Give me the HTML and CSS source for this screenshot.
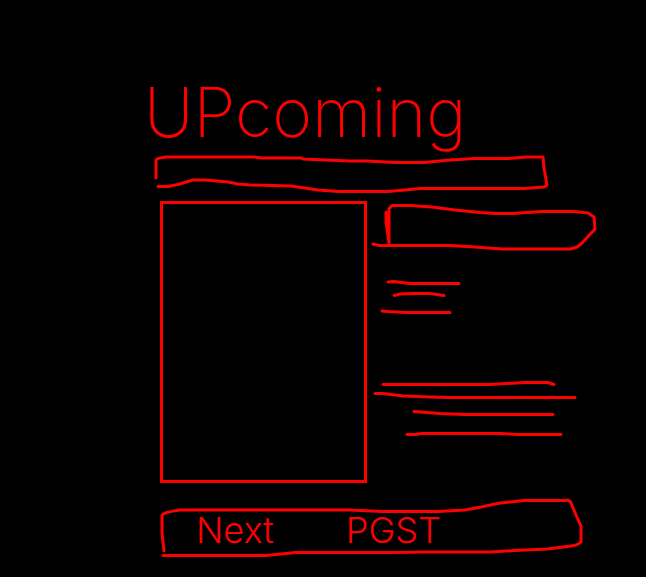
FILE: index.html
```html
<!DOCTYPE html>
<html lang="en">
<head>
<meta charset="utf-8">
<title>Upcoming</title>
<link rel="stylesheet" href="styles.css">
</head>
<body>
<main class="page">
  <h1 class="title">UPcoming</h1>
  <svg class="stroke banner" viewBox="144 148 454 48" preserveAspectRatio="none" aria-hidden="true">
    <path d="M156 178V160Q157 158 166 157H253L262 158H301L303 159L325 160L350 161L367 161L395 162.500H424L450 160L475 158.500H508L526 157L543 157L544 168L547 185L544 187L524 188.500H420L405 190L388 191.500H339L318 190L291 186L250 185L238 184L228 182L205 180H193L186 182L180 184L168 186.500H158"/>
  </svg>
  <section class="feature">
    <div class="poster"></div>
    <div class="details">
      <svg class="stroke field" viewBox="371 196 227 60" preserveAspectRatio="none" aria-hidden="true">
        <path d="M386 212V222L389 243V209L392 205.500H411L432 207L455 210L480 212.500L495 213.500H513L542 211.500H574L588 213L594 217L595 229L581 244L577 247L571 249H502L475 247L450 245.500H379L373 244"/>
      </svg>
      <svg class="stroke summary" viewBox="371 272 227 48" preserveAspectRatio="none" aria-hidden="true">
        <path d="M388 282L394 281.500L410 283.500H459M394 295.500L400 294L412 293.500H430L444 295.500M382 311L388 311.500L406 312.500H450"/>
      </svg>
      <svg class="stroke description" viewBox="371 376 227 64" preserveAspectRatio="none" aria-hidden="true">
        <path d="M383 384.500H490L525 382.500H548L554 384.500M375 393.500H382L404 396L430 397L450 397.500H575M414 411.500L440 413.500L465 414.500H553M407 434.500H415L422 433.500H500L518 434.500H561"/>
      </svg>
    </div>
  </section>
  <button class="next" type="button">
    <svg class="stroke outline" viewBox="144 492 454 68" preserveAspectRatio="none" aria-hidden="true">
      <path d="M164 551L162 534V515Q164 512 180 510H350L382 511.500H438L465 510L481 507L500 503L524 500.500H565Q569 499 571 503L576 515L581 526V542Q578 545 571 546L547 549L515 550.500L490 552H423L395 552.500H296L266 555.500H163"/>
    </svg>
    <span>Next</span>
    <span>PGST</span>
  </button>
</main>
</body>
</html>
```
FILE: styles.css
```css
* {
  box-sizing: border-box;
}

body {
  margin: 0;
  background: #000;
  color: #f00;
  font-family: Inter, "Open Sans", sans-serif;
  font-weight: 300;
}

.page {
  padding: 88px 48px 16px 144px;
}

.title {
  margin: 0 0 12px;
  font-size: 68px;
  font-weight: 200;
  line-height: 48px;
}

.stroke {
  display: block;
  width: 100%;
  overflow: visible;
  fill: none;
  stroke: #f00;
  stroke-width: 3px;
  stroke-linecap: round;
  stroke-linejoin: round;
}

.stroke path {
  vector-effect: non-scaling-stroke;
}

.banner {
  height: 48px;
}

.feature {
  display: grid;
  grid-template-columns: 1fr 1fr;
  margin-bottom: 4px;
}

.poster {
  min-height: 282px;
  margin: 5px 4px 5px 16px;
  border: 3px solid #f00;
}

.field {
  height: 60px;
}

.summary {
  height: 48px;
  margin-top: 16px;
}

.description {
  height: 64px;
  margin-top: 56px;
}

.next {
  position: relative;
  display: flex;
  align-items: center;
  gap: 72px;
  width: 100%;
  height: 68px;
  padding: 8px 0 0 52px;
  border: 0;
  background: none;
  color: inherit;
  font: inherit;
  font-size: 36px;
  line-height: 40px;
  text-align: left;
  cursor: pointer;
}

.outline {
  position: absolute;
  inset: 0;
  height: 100%;
}
```
